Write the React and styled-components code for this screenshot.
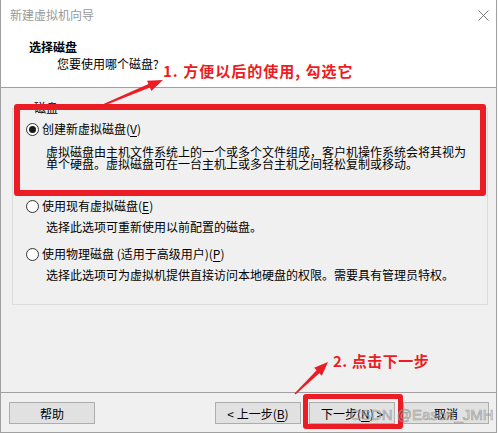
import styled, { createGlobalStyle } from "styled-components";

const RED = "#ec1c24";

const GlobalStyle = createGlobalStyle`
    html, body {
        margin: 0;
        padding: 0;
        background: #ffffff;
    }
    body {
        font-family: "Noto Sans CJK SC", "Liberation Sans", sans-serif;
        font-size: 12px;
        color: #000;
    }
`

const Window = styled.div`
    position: relative;
    box-sizing: border-box;
    width: 497px;
    height: 433px;
    display: flex;
    flex-direction: column;
    background: #f0f0f0;
    border-left: 1px solid #a0a0a0;
    border-right: 1px solid #a0a0a0;
    border-bottom: 1px solid #a0a0a0;
    overflow: hidden;
`

const TitleBar = styled.div`
    height: 30px;
    display: flex;
    align-items: center;
    justify-content: space-between;
    padding: 0 7px 0 9px;
    background: #fff;
`

const Caption = styled.span`
    color: #999;
    font-size: 12px;
    line-height: 16px;
`

const Header = styled.div`
    box-sizing: border-box;
    height: 58px;
    padding: 9px 0 0 28px;
    background: #fff;
    border-bottom: 1px solid #a0a0a0;
`

const Heading = styled.div`
    font-weight: bold;
    line-height: 16px;
`

const SubHeading = styled.div`
    margin: 1px 0 0 28px;
    line-height: 16px;
`

const Body = styled.div`
    flex: 1;
    padding-top: 13px;
`

const GroupBox = styled.fieldset`
    margin: 0 8px 0 11px;
    padding: 6px 0 23px 13px;
    border: 1px solid #dcdcdc;
    min-width: 0;
`

const Legend = styled.legend`
    margin-left: 7px;
    padding: 0 1px;
    line-height: 14px;
`

const Option = styled.div`
    margin-bottom: ${props => props.$space}px;
`

const RadioRow = styled.label`
    display: flex;
    align-items: center;
    gap: 3px;
    height: 16px;
    line-height: 16px;
`

const Radio = styled.span`
    box-sizing: border-box;
    width: 13px;
    height: 13px;
    border-radius: 50%;
    border: 1px solid #333;
    background: #fff;
    display: flex;
    align-items: center;
    justify-content: center;

    &::after {
        content: "";
        width: 7px;
        height: 7px;
        border-radius: 50%;
        background: #1a1a1a;
        display: ${props => (props.$checked ? "block" : "none")};
    }
`

const Desc = styled.div`
    margin: ${props => props.$top}px 0 0 20px;
    line-height: 12px;
    white-space: nowrap;
`

const Key = styled.span`
    text-decoration: underline;
    text-underline-offset: 2px;
`

const Footer = styled.div`
    display: flex;
    align-items: center;
    gap: 8px;
    padding: 9px 7px 8px 8px;
    border-top: 1px solid #a0a0a0;
`

const Spacer = styled.div`
    flex: 1;
`

const Button = styled.button`
    box-sizing: border-box;
    width: 86px;
    height: 22px;
    padding: 0;
    background: #e1e1e1;
    border: 1px solid #adadad;
    font-family: inherit;
    font-size: 12px;
    color: #000;
`

const Mark = styled.div`
    position: absolute;
    box-sizing: border-box;
    left: ${props => props.$x}px;
    top: ${props => props.$y}px;
    width: ${props => props.$w}px;
    height: ${props => props.$h}px;
    border: ${props => props.$t}px solid ${RED};
    border-radius: 3px;
`

const Note = styled.div`
    position: absolute;
    left: ${props => props.$x}px;
    top: ${props => props.$y}px;
    color: ${RED};
    font-weight: bold;
    font-size: 15px;
    line-height: 18px;
    letter-spacing: ${props => props.$spacing}px;
    white-space: nowrap;
`

const Overlay = styled.svg`
    position: absolute;
    left: 0;
    top: 0;
    pointer-events: none;
`

const Watermark = styled.div`
    position: absolute;
    left: 349px;
    top: 406px;
    font-family: "Liberation Sans", sans-serif;
    font-size: 15px;
    line-height: 18px;
    color: rgba(215, 215, 215, 0.55);
    -webkit-text-stroke: 0.6px rgba(110, 110, 110, 0.6);
    white-space: nowrap;
`

function arrowPoints(tx, ty, hx, hy, headLen, headW, tailW, neckW) {
    const dx = hx - tx;
    const dy = hy - ty;
    const len = Math.hypot(dx, dy);
    const ux = dx / len;
    const uy = dy / len;
    const nx = -uy;
    const ny = ux;
    const bx = hx - ux * headLen;
    const by = hy - uy * headLen;
    const p = (x, y) => `${x.toFixed(1)},${y.toFixed(1)}`;
    return [
        p(tx + nx * tailW / 2, ty + ny * tailW / 2),
        p(bx + nx * neckW / 2, by + ny * neckW / 2),
        p(bx + nx * headW / 2, by + ny * headW / 2),
        p(hx, hy),
        p(bx - nx * headW / 2, by - ny * headW / 2),
        p(bx - nx * neckW / 2, by - ny * neckW / 2),
        p(tx - nx * tailW / 2, ty - ny * tailW / 2),
    ].join(" ");
}

const options = [
    {
        label: <>创建新虚拟磁盘(<Key>V</Key>)</>,
        desc: ["虚拟磁盘由主机文件系统上的一个或多个文件组成，客户机操作系统会将其视为", "单个硬盘。虚拟磁盘可在一台主机上或多台主机之间轻松复制或移动。"],
        checked: true,
        top: 9,
        space: 28,
    },
    {
        label: <>使用现有虚拟磁盘(<Key>E</Key>)</>,
        desc: ["选择此选项可重新使用以前配置的磁盘。"],
        top: 7,
        space: 13,
    },
    {
        label: <>使用物理磁盘 (适用于高级用户)(<Key>P</Key>)</>,
        desc: ["选择此选项可为虚拟机提供直接访问本地硬盘的权限。需要具有管理员特权。"],
        top: 7,
        space: 0,
    },
];

export default function App() {
    return (
        <>
            <GlobalStyle />
            <Window>
                <TitleBar>
                    <Caption>新建虚拟机向导</Caption>
                    <svg width="11" height="11" viewBox="0 0 11 11">
                        <path d="M0.5 0.5 L10.5 10.5 M10.5 0.5 L0.5 10.5" stroke="#7a7a7a" strokeWidth="1" />
                    </svg>
                </TitleBar>
                <Header>
                    <Heading>选择磁盘</Heading>
                    <SubHeading>您要使用哪个磁盘?</SubHeading>
                </Header>
                <Body>
                    <GroupBox>
                        <Legend>磁盘</Legend>
                        {options.map((o, i) => (
                            <Option key={i} $space={o.space}>
                                <RadioRow>
                                    <Radio $checked={o.checked} />
                                    <span>{o.label}</span>
                                </RadioRow>
                                <Desc $top={o.top}>
                                    {o.desc.map((line, j) => (
                                        <div key={j}>{line}</div>
                                    ))}
                                </Desc>
                            </Option>
                        ))}
                    </GroupBox>
                </Body>
                <Footer>
                    <Button>帮助</Button>
                    <Spacer />
                    <Button>&lt; 上一步(<Key>B</Key>)</Button>
                    <Button>下一步(<Key>N</Key>) &gt;</Button>
                    <Button>取消</Button>
                </Footer>

                <Mark $x={13} $y={104} $w={472} $h={92} $t={6} />
                <Mark $x={302} $y={394} $w={100} $h={35} $t={5} />
                <Overlay width="497" height="433">
                    <polygon fill={RED} points={arrowPoints(100, 106, 162, 80, 15, 11, 1.5, 4)} />
                    <polygon fill={RED} points={arrowPoints(294, 394, 327, 362, 14, 11, 1.5, 4)} />
                </Overlay>
                <Note $x={162} $y={62} $spacing={1}>1. 方便以后的使用, 勾选它</Note>
                <Note $x={332} $y={352} $spacing={0.5}>2. 点击下一步</Note>
                <Watermark>CSDN @Eason_JMH</Watermark>
            </Window>
        </>
    );
}
